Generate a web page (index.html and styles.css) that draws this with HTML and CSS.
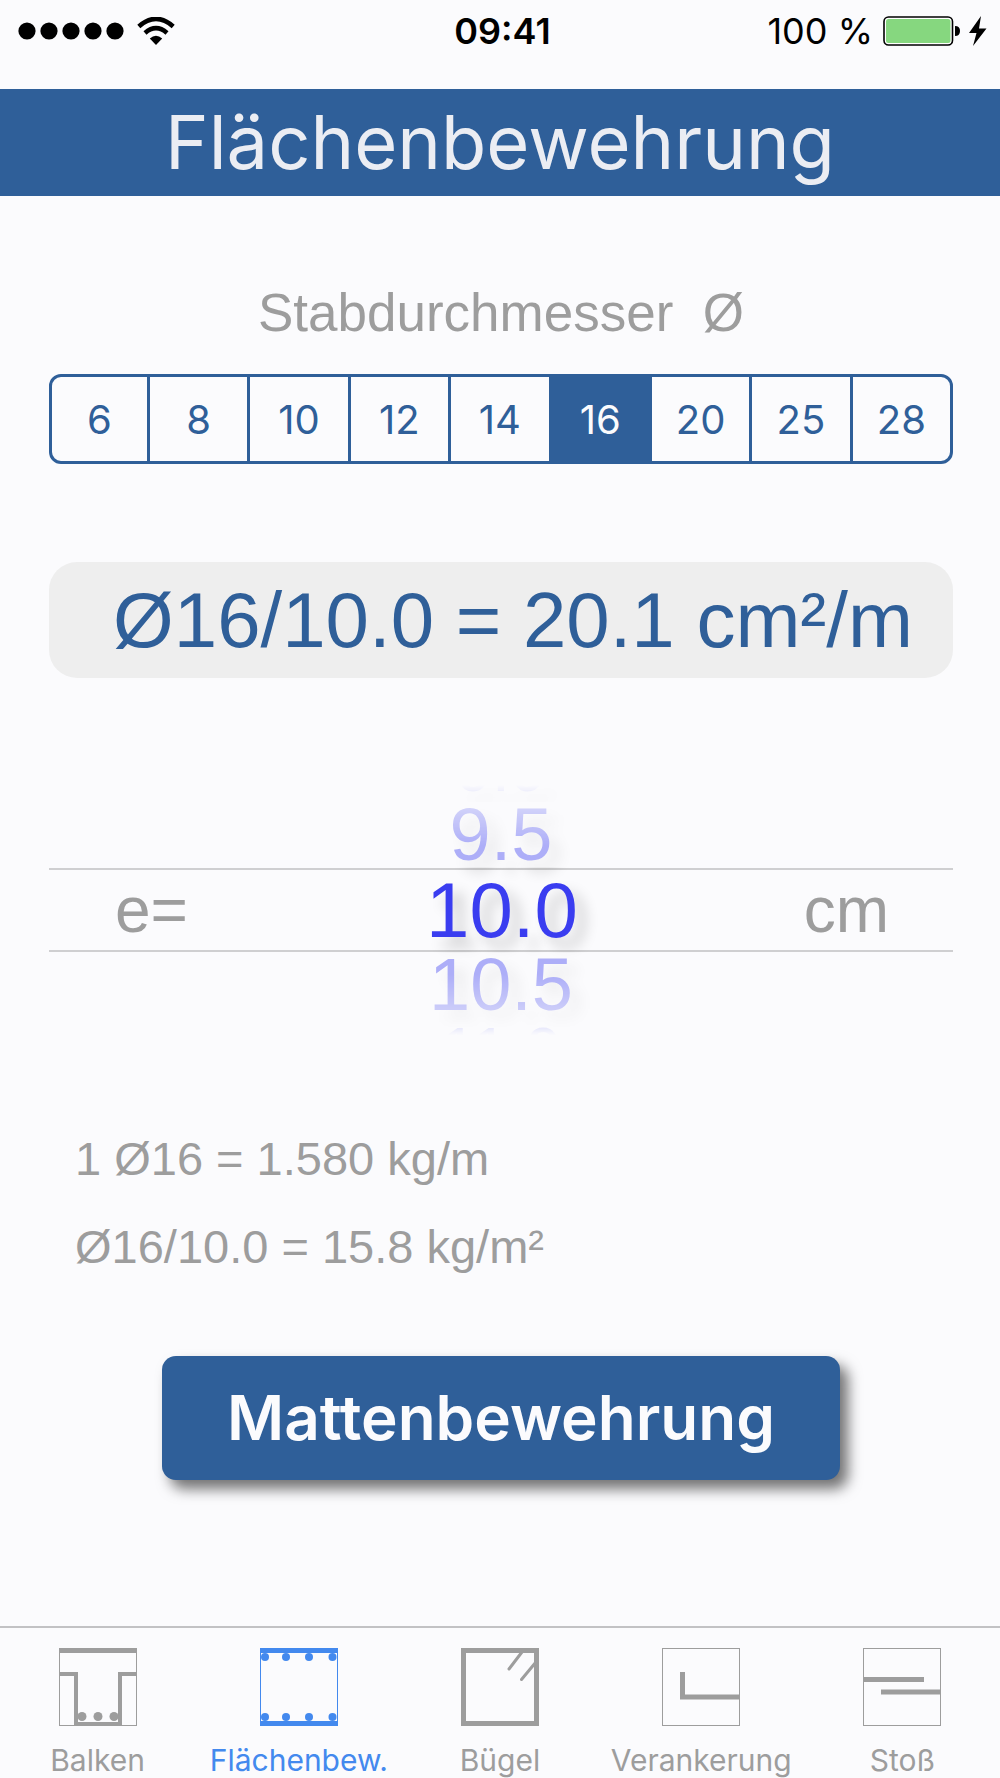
FILE: index.html
```html
<!DOCTYPE html>
<html lang="de">
<head>
  <meta charset="UTF-8" />
  <meta name="viewport" content="width=device-width, initial-scale=1" />
  <title>Flächenbewehrung</title>
  <link rel="stylesheet" href="styles.css">
</head>
<body>

  <div class="status-bar">
    <div class="status-left">
      <svg class="signal" width="106" height="18" viewBox="0 0 106 18">
        <circle cx="9" cy="9" r="8.6" />
        <circle cx="31" cy="9" r="8.6" />
        <circle cx="53" cy="9" r="8.6" />
        <circle cx="75" cy="9" r="8.6" />
        <circle cx="97" cy="9" r="8.6" />
      </svg>
      <svg class="wifi" width="38" height="28" viewBox="0 0 38 28">
        <path d="M1.8 9.4 Q19 -5.6 36.2 9.4" fill="none" stroke="#000" stroke-width="4.6" />
        <path d="M8 16 Q19 6.4 30 16" fill="none" stroke="#000" stroke-width="4.6" />
        <path d="M12.8 21.4 Q19 16.2 25.2 21.4 L19 28 Z" />
      </svg>
    </div>
    <div class="status-time">09:41</div>
    <div class="status-right">
      <span>100 %</span>
      <svg class="battery" width="104" height="30" viewBox="0 0 104 30">
        <rect x="1" y="1" width="68.5" height="28" rx="4.5" fill="#fff" stroke="#000" stroke-width="1.6" />
        <rect x="3" y="3" width="64.5" height="24" rx="2.5" fill="#86d77f" />
        <path d="M72 10 Q77 10 77 15 Q77 20 72 20 Z" />
        <path d="M98 0 L86 17 L93.500 17 L90 30 L103.500 12.500 L96 12.500 Z" />
      </svg>
    </div>
  </div>

  <header class="title-bar">
    <h1>Flächenbewehrung</h1>
  </header>

  <main class="content">
    <fieldset class="diameter">
      <legend>Stabdurchmesser &nbsp;Ø</legend>
      <div class="segments">
        <label class="segment"><input type="radio" name="diameter" value="6">6</label>
        <label class="segment"><input type="radio" name="diameter" value="8">8</label>
        <label class="segment"><input type="radio" name="diameter" value="10">10</label>
        <label class="segment"><input type="radio" name="diameter" value="12">12</label>
        <label class="segment"><input type="radio" name="diameter" value="14">14</label>
        <label class="segment"><input type="radio" name="diameter" value="16" checked>16</label>
        <label class="segment"><input type="radio" name="diameter" value="20">20</label>
        <label class="segment"><input type="radio" name="diameter" value="25">25</label>
        <label class="segment"><input type="radio" name="diameter" value="28">28</label>
      </div>
    </fieldset>

    <div class="result">Ø16/10.0 = 20.1 cm²/m</div>

    <!-- Spacing wheel -->
    <div class="wheel" role="radiogroup" aria-label="Stababstand">
      <label class="wheel-row edge edge-top"><input type="radio" name="spacing" value="9.0">9.0</label>
      <label class="wheel-row near"><input type="radio" name="spacing" value="9.5">9.5</label>
      <div class="wheel-row current">
        <span class="unit">e=</span>
        <label class="value"><input type="radio" name="spacing" value="10.0" checked>10.0</label>
        <span class="unit">cm</span>
      </div>
      <label class="wheel-row near"><input type="radio" name="spacing" value="10.5">10.5</label>
      <label class="wheel-row edge edge-bottom"><input type="radio" name="spacing" value="11.0">11.0</label>
    </div>

    <div class="weights">
      <p>1 Ø16 = 1.580 kg/m</p>
      <p>Ø16/10.0 = 15.8 kg/m²</p>
    </div>

    <button class="mesh-button" type="button">Mattenbewehrung</button>
  </main>

  <nav class="tab-bar">
    <a class="tab" href="#balken">
      <svg width="78" height="78" viewBox="0 0 78 78" fill="none" stroke="currentColor">
        <rect x="0.500" y="0.500" width="77" height="77" />
        <path d="M0 2.500 H78" stroke-width="5" />
        <path d="M0 26 H17 V76 H61 V26 H78" stroke-width="4" />
        <g fill="currentColor" stroke="none">
          <circle cx="23" cy="68.500" r="4.500" />
          <circle cx="39" cy="68.500" r="4.500" />
          <circle cx="55" cy="68.500" r="4.500" />
        </g>
      </svg>
      Balken
    </a>
    <a class="tab active" href="#flaechenbewehrung">
      <svg width="78" height="78" viewBox="0 0 78 78" fill="none" stroke="currentColor">
        <rect x="0.500" y="0.500" width="77" height="77" />
        <path d="M0 2.500 H78 M0 75.500 H78" stroke-width="5" />
        <g fill="currentColor" stroke="none">
          <circle cx="5" cy="9" r="4" />
          <circle cx="26" cy="9" r="4" />
          <circle cx="49" cy="9" r="4" />
          <circle cx="72.500" cy="9" r="4" />
          <circle cx="5" cy="69" r="4" />
          <circle cx="26" cy="69" r="4" />
          <circle cx="49" cy="69" r="4" />
          <circle cx="72.500" cy="69" r="4" />
        </g>
      </svg>
      Flächenbew.
    </a>
    <a class="tab" href="#buegel">
      <svg width="78" height="78" viewBox="0 0 78 78" fill="none" stroke="currentColor">
        <rect x="2.500" y="2.500" width="73" height="73" stroke-width="5" />
        <path d="M61 4 L48 21 M75 14 L60.500 31.500" stroke-width="3" stroke-linecap="round" />
      </svg>
      Bügel
    </a>
    <a class="tab" href="#verankerung">
      <svg width="78" height="78" viewBox="0 0 78 78" fill="none" stroke="currentColor">
        <rect x="0.500" y="0.500" width="77" height="77" />
        <path d="M20.500 24 V49 H78" stroke-width="5" />
      </svg>
      Verankerung
    </a>
    <a class="tab" href="#stoss">
      <svg width="78" height="78" viewBox="0 0 78 78" fill="none" stroke="currentColor">
        <rect x="0.500" y="0.500" width="77" height="77" />
        <path d="M0 31.500 H61 M18 44 H78" stroke-width="5" />
      </svg>
      Stoß
    </a>
  </nav>

</body>
</html>
```
FILE: styles.css
```css
* {
  box-sizing: border-box;
}

body {
  margin: 0;
  min-height: 100vh;
  display: flex;
  flex-direction: column;
  overflow-x: hidden;
  background-color: #fbfbfd;
  color: #9d9d9d;
  font-family: "Liberation Sans", Arial, sans-serif;
}

input[type="radio"] {
  appearance: none;
  width: 0;
  height: 0;
  margin: 0;
}

.status-bar {
  display: grid;
  grid-template-columns: 1fr auto 1fr;
  align-items: center;
  padding: 9px 13px 36px 18px;
  color: #000;
  font-family: Inter, sans-serif;
  font-size: 36px;
  line-height: 44px;
}

.status-left,
.status-right {
  display: flex;
  align-items: center;
}

.status-left {
  gap: 13px;
}

.status-right {
  gap: 10px;
  justify-content: flex-end;
}

.status-time {
  font-weight: 600;
}

.title-bar {
  background-color: #2f5f99;
  color: #ebedf3;
  text-align: center;
}

.title-bar h1 {
  margin: 0;
  font-family: Inter, sans-serif;
  font-size: 74px;
  font-weight: 400;
  line-height: 107px;
}

.content {
  flex: 1;
  display: flex;
  flex-direction: column;
  padding: 87px 47px 40px 49px;
}

.diameter {
  margin: 0;
  padding: 0;
  border: none;
  min-width: 0;
}

.diameter legend {
  width: 100%;
  padding: 0;
  margin-bottom: 31px;
  font-size: 53px;
  line-height: 60px;
  text-align: center;
}

.segments {
  display: flex;
  height: 90px;
  border: 3px solid #2f5f99;
  border-radius: 12px;
  overflow: hidden;
  color: #2f5f99;
  font-family: Inter, sans-serif;
  font-size: 40px;
}

.segment {
  flex: 1;
  display: flex;
  align-items: center;
  justify-content: center;
  cursor: pointer;
}

.segment:first-child {
  flex: 0 1 95px;
}

.segment + .segment {
  border-left: 3px solid #2f5f99;
}

.segment:has(input:checked) {
  background-color: #2f5f99;
  color: #fbfbfd;
}

.result {
  margin-top: 98px;
  padding-right: 40px;
  border-radius: 28px;
  background-color: #eeeeee;
  color: #2f5f99;
  font-size: 78px;
  line-height: 116px;
  text-align: right;
}

.wheel {
  margin-top: 107px;
  color: #3a3df0;
  -webkit-mask-image: linear-gradient(transparent, rgba(0, 0, 0, 0.2) 20px, rgba(0, 0, 0, 0.4) 60px, rgba(0, 0, 0, 0.4) 82px, #000 82px, #000 168px, rgba(0, 0, 0, 0.4) 168px, rgba(0, 0, 0, 0.4) 190px, rgba(0, 0, 0, 0.2) 235px, transparent);
  mask-image: linear-gradient(transparent, rgba(0, 0, 0, 0.2) 20px, rgba(0, 0, 0, 0.4) 60px, rgba(0, 0, 0, 0.4) 82px, #000 82px, #000 168px, rgba(0, 0, 0, 0.4) 168px, rgba(0, 0, 0, 0.4) 190px, rgba(0, 0, 0, 0.2) 235px, transparent);
}

.wheel-row {
  display: flex;
  justify-content: center;
  text-shadow: 10px 10px 14px rgba(0, 0, 0, 0.2);
}

.near {
  font-size: 74px;
  line-height: 66px;
}

.edge {
  height: 17px;
  overflow: hidden;
  font-size: 64px;
  line-height: 66px;
}

.edge-top {
  align-items: flex-end;
}

.edge-bottom {
  align-items: flex-start;
}

.current {
  display: grid;
  grid-template-columns: 1fr auto 1fr;
  align-items: center;
  padding: 0 64px 0 66px;
  border-top: 2px solid #cfcfd1;
  border-bottom: 2px solid #cfcfd1;
  font-size: 78px;
  line-height: 80px;
}

.unit {
  color: #9d9d9d;
  font-size: 64px;
  text-shadow: none;
}

.unit:last-child {
  text-align: right;
}

.weights {
  margin-top: 80px;
  padding-left: 26px;
  font-size: 47px;
  line-height: 88px;
}

.weights p {
  margin: 0;
}

.mesh-button {
  align-self: center;
  width: 75%;
  margin-top: 65px;
  padding: 0;
  border: none;
  border-radius: 14px;
  background-color: #2f5f99;
  box-shadow: 8px 9px 14px rgba(0, 0, 0, 0.55);
  color: #fbfbfd;
  font-family: Inter, sans-serif;
  font-size: 62px;
  font-weight: 600;
  line-height: 124px;
  cursor: pointer;
}

.tab-bar {
  display: flex;
  margin: 0 -3px;
  border-top: 2px solid #c2c2c4;
  padding-top: 20px;
}

.tab {
  flex: 1 1 0;
  min-width: 0;
  display: flex;
  flex-direction: column;
  align-items: center;
  gap: 16px;
  color: #9d9d9d;
  font-family: Inter, sans-serif;
  font-size: 30px;
  line-height: 36px;
  text-decoration: none;
}

.tab.active {
  color: #4389ee;
}
```
